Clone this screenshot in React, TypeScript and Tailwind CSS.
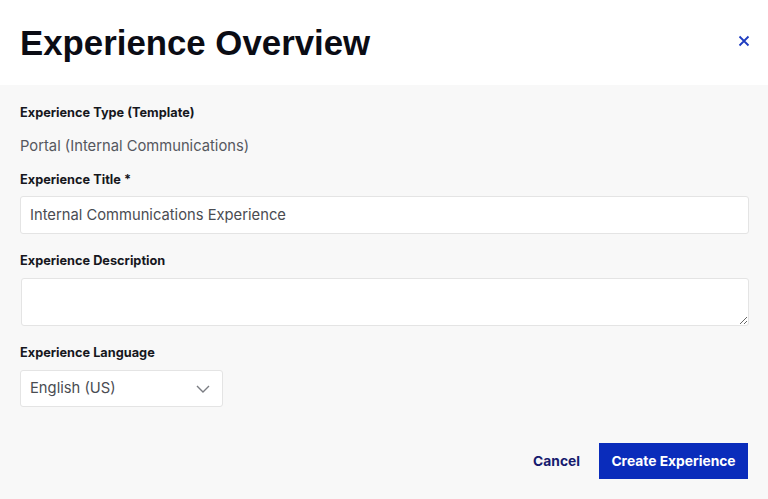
import { FC } from 'react';

const Label: FC<{ text: string; className?: string }> = ({ text, className }) => (
    <div className={`pt-px text-[12.75px] leading-5 font-bold text-[#16171d] ${className ?? ''}`}>{text}</div>
);

const App: FC = () => {
    return (
        <div className="w-[768px] h-[499px] bg-[#f8f8f8] font-['Inter',sans-serif] overflow-hidden">
            {/* Header */}
            <div className="h-[85px] bg-white flex items-center justify-between pl-5 pr-[19px]">
                <h1 className="font-['Liberation_Sans',sans-serif] font-bold text-[34.8px] leading-none text-[#0b0c14] pt-[2px]">
                    Experience Overview
                </h1>
                <button className="text-[#1f3dc0] -mt-1 -mr-px">
                    <svg width="12" height="12" viewBox="0 0 12 12" fill="none" stroke="currentColor" strokeWidth="1.8">
                        <path d="M1.5 1.5l9 9M10.5 1.5l-9 9" />
                    </svg>
                </button>
            </div>

            {/* Form */}
            <div className="px-5 pt-[17px]">
                <Label text="Experience Type (Template)" />
                <div className="mt-[11px] text-[14.75px] leading-6 text-[#55575e]">Portal (Internal Communications)</div>

                <Label text="Experience Title *" className="mt-[11px]" />
                <input
                    defaultValue="Internal Communications Experience"
                    className="mt-[6px] w-[729px] h-[38px] bg-white border border-[#e4e4e4] rounded-[3px] px-[9px] text-[14.75px] text-[#4a4c52] outline-none"
                />

                <Label text="Experience Description" className="mt-4" />
                <textarea
                    className="mt-[7px] block w-[728px] h-[48px] bg-white border border-[#e4e4e4] rounded-[3px] ml-px outline-none"
                />

                <Label text="Experience Language" className="mt-4" />
                <div className="mt-[7px] w-[203px] h-[37px] bg-white border border-[#e4e4e4] rounded-[3px] flex items-center justify-between pl-[9px] pr-[12px]">
                    <span className="text-[14.75px] text-[#4a4c52]">English (US)</span>
                    <svg width="14" height="8" viewBox="0 0 14 8" fill="none" stroke="#7a7c82" strokeWidth="1.4">
                        <path d="M1 1l6 6 6-6" />
                    </svg>
                </div>

                <div className="mt-9 flex items-center justify-end gap-[19px]">
                    <button className="text-[13.8px] font-bold text-[#161a6e]">Cancel</button>
                    <button className="h-9 w-[149px] bg-[#0a2cbb] text-white text-[13.8px] font-bold">Create Experience</button>
                </div>
            </div>
        </div>
    );
};

export default App;
